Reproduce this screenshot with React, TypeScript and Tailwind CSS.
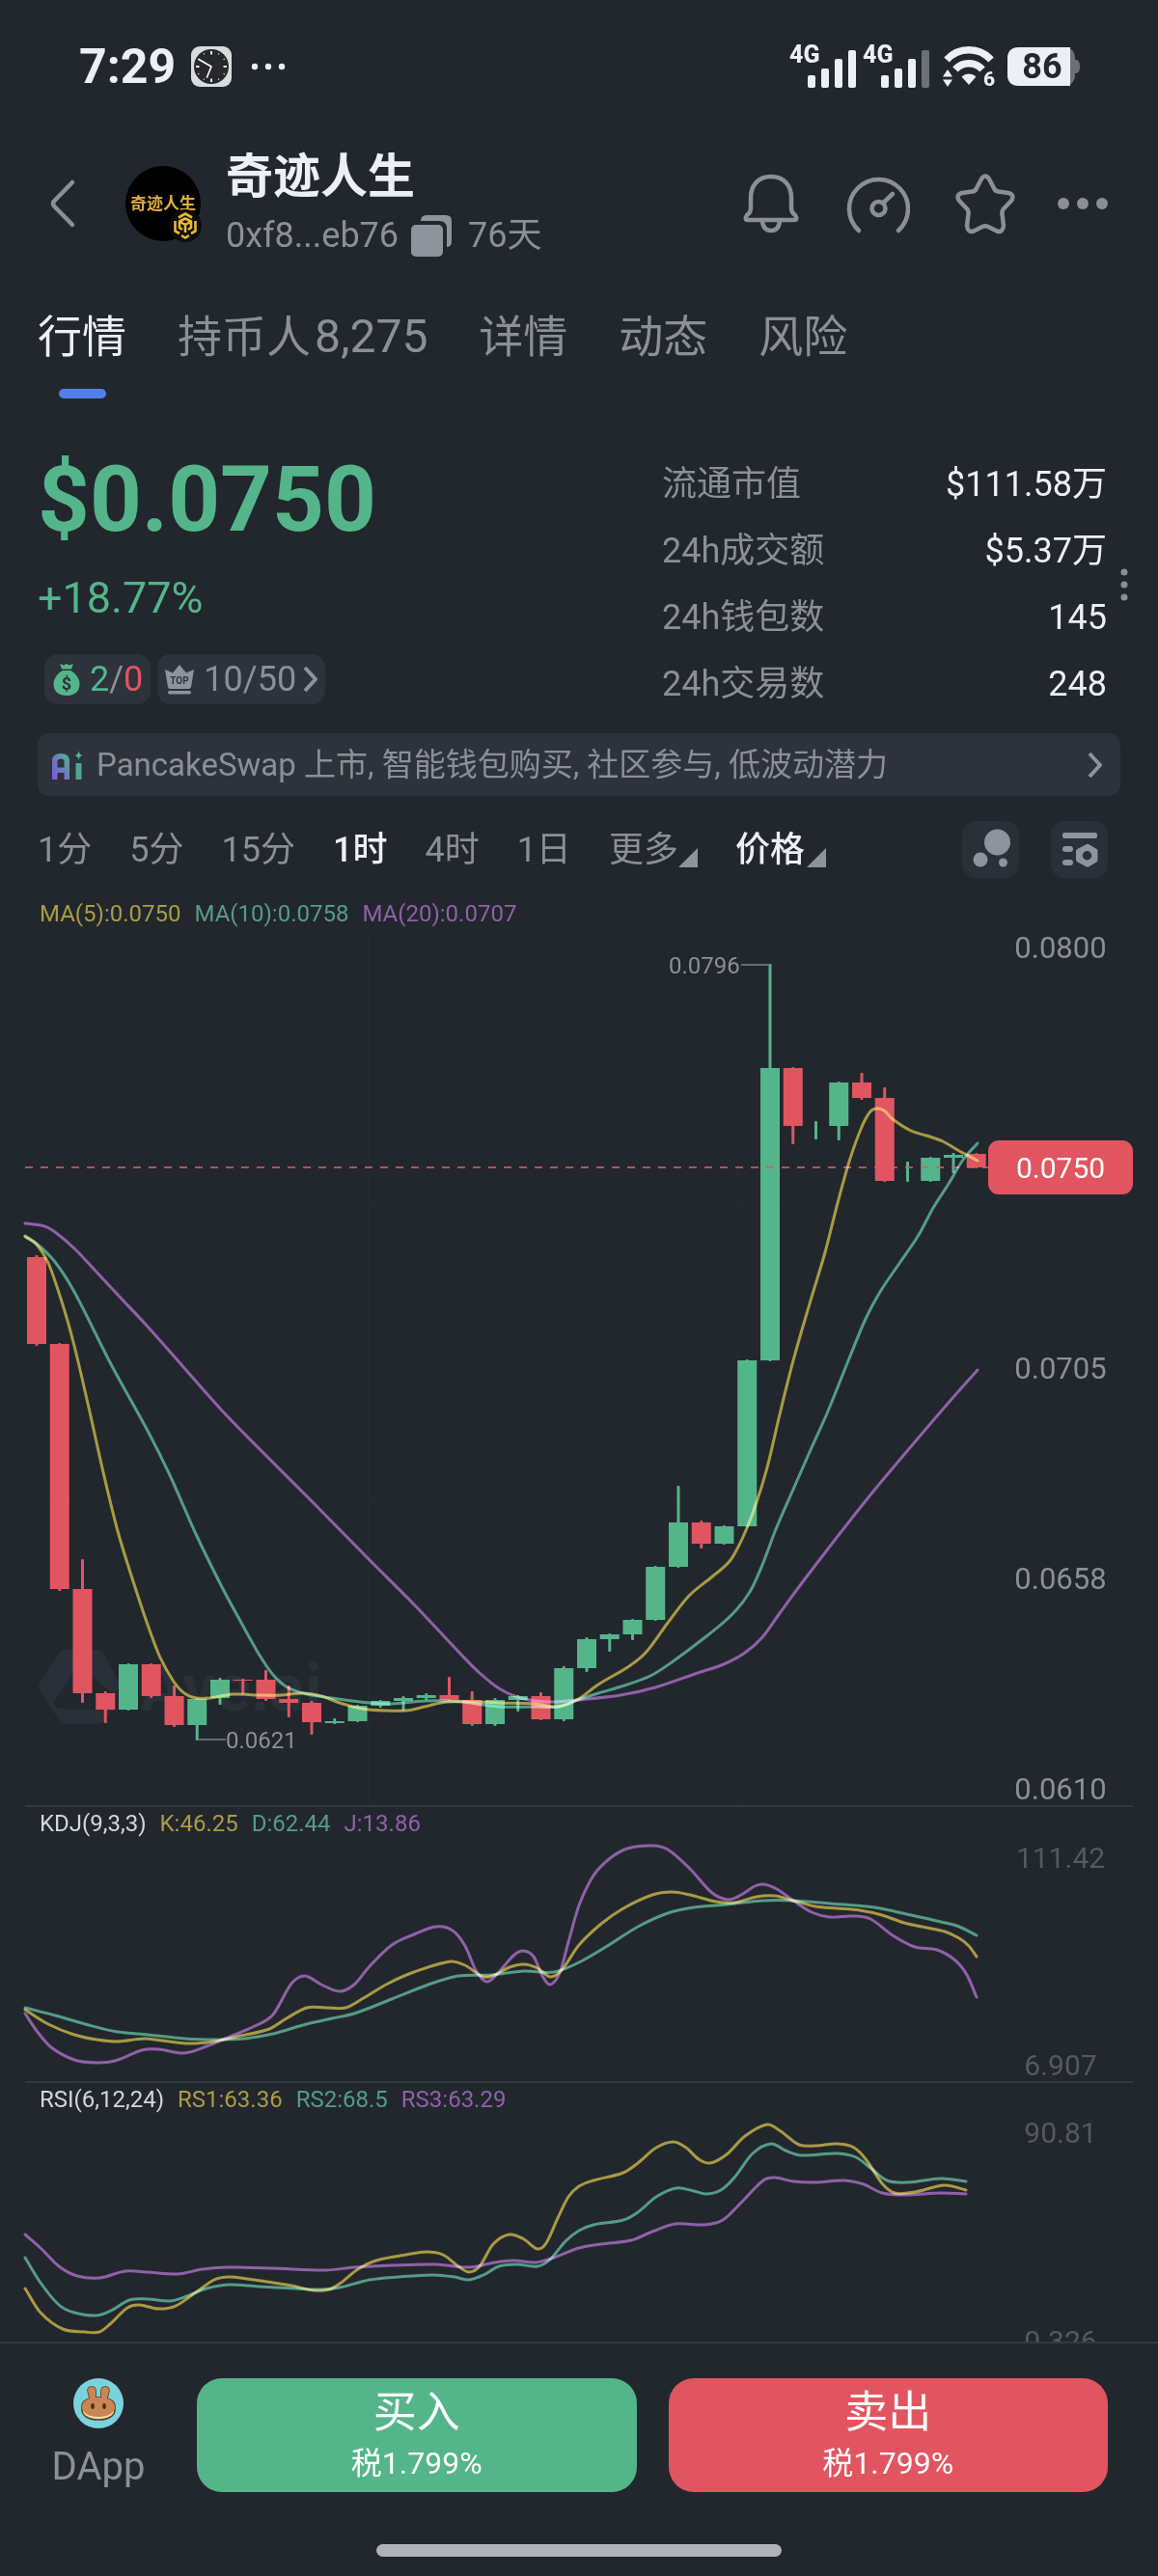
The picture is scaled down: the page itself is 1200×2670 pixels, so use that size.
import React from "react";

type Pt = [number, number];
type Candle = [top: number, bottom: number, high: number, low: number, up: 0 | 1];

const UP = "#55b58a";
const DOWN = "#e15560";
const YELLOW = "#9c881b";
const GREEN = "#3b8a6a";
const PURPLE = "#7e4494";

/** Smooth cubic path through the points. */
function smooth(p: Pt[]): string {
  let d = `M${p[0][0]} ${p[0][1]}`;
  for (let i = 0; i < p.length - 1; i++) {
    const a = p[Math.max(i - 1, 0)];
    const b = p[i];
    const c = p[i + 1];
    const e = p[Math.min(i + 2, p.length - 1)];
    const k = (c[0] - b[0]) / 3;
    const mb = (c[1] - a[1]) / (c[0] - a[0]);
    const mc = (e[1] - b[1]) / (e[0] - b[0]);
    d += `C${b[0] + k} ${b[1] + k * mb} ${c[0] - k} ${c[1] - k * mc} ${c[0]} ${c[1]}`;
  }
  return d;
}

const CANDLES: Candle[] = [
  [1303, 1393, 1301, 1395, 0], [1393, 1647, 1392, 1649, 0], [1647, 1755, 1616, 1765, 0],
  [1755, 1772, 1753, 1786, 0], [1725, 1772, 1724, 1773, 1], [1725, 1758, 1724, 1760, 0],
  [1758, 1788, 1747, 1790, 0], [1761, 1788, 1760, 1804, 1], [1741, 1760, 1739, 1767, 1],
  [1741, 1742, 1740, 1756, 0], [1741, 1761, 1731, 1763, 0], [1761, 1765, 1747, 1780, 0],
  [1765, 1785, 1763, 1798, 0], [1784, 1786, 1781, 1787, 1], [1768, 1784, 1767, 1785, 1],
  [1763, 1768, 1762, 1770, 1], [1760, 1763, 1758, 1773, 1], [1757, 1760, 1755, 1762, 1],
  [1757, 1762, 1738, 1763, 0], [1762, 1787, 1753, 1789, 0], [1762, 1787, 1760, 1789, 1],
  [1758, 1762, 1757, 1774, 1], [1758, 1782, 1754, 1783, 0], [1729, 1782, 1727, 1784, 1],
  [1699, 1729, 1697, 1733, 1], [1694, 1699, 1693, 1712, 1], [1679, 1694, 1678, 1700, 1],
  [1624, 1679, 1623, 1680, 1], [1578, 1624, 1540, 1625, 1], [1578, 1600, 1576, 1605, 0],
  [1582, 1600, 1581, 1601, 1], [1410, 1582, 1409, 1583, 1], [1107, 1410, 999, 1411, 1],
  [1107, 1167, 1106, 1186, 0], [1167, 1167, 1162, 1181, 1], [1122, 1167, 1121, 1182, 1],
  [1122, 1138, 1112, 1140, 0], [1138, 1224, 1127, 1225, 0], [1224, 1224, 1204, 1225, 1],
  [1200, 1224, 1199, 1225, 1], [1197, 1200, 1195, 1216, 1], [1196, 1210, 1195, 1211, 0],
];

const MA20: Pt[] = [[26,1268],[46,1271],[57,1277],[77,1294],[96,1314],[122,1342],[153,1375],[191,1418],[230,1462],[268,1501],[325,1558],[383,1617],[429,1663],[478,1715],[497,1734],[517,1750],[536,1759],[555,1763],[574,1764],[598,1762],[643,1757],[679,1749],[723,1734],[750,1725],[772,1713],[790,1697],[808,1672],[830,1642],[866,1595],[904,1547],[946,1497],[982,1455],[1013,1420]];
const MA10: Pt[] = [[26,1282],[38,1289],[57,1308],[77,1339],[115,1414],[153,1483],[176,1529],[203,1590],[230,1645],[249,1680],[268,1714],[283,1736],[298,1749],[318,1756],[344,1760],[383,1765],[406,1766],[440,1763],[478,1764],[517,1769],[555,1769],[578,1769],[598,1762],[620,1755],[647,1747],[674,1737],[696,1723],[732,1696],[759,1673],[777,1650],[790,1622],[804,1585],[821,1546],[839,1505],[857,1465],[880,1408],[897,1367],[912,1339],[933,1308],[952,1280],[967,1252],[983,1227],[998,1202],[1013,1185]];
const MA5: Pt[] = [[26,1281],[38,1290],[50,1309],[63,1346],[76,1391],[92,1459],[107,1526],[122,1587],[138,1639],[153,1684],[166,1718],[180,1743],[191,1755],[203,1760],[218,1760],[241,1756],[268,1757],[291,1757],[314,1755],[333,1758],[352,1765],[375,1771],[398,1773],[421,1773],[440,1769],[463,1764],[497,1764],[517,1765],[555,1766],[578,1769],[598,1762],[620,1746],[652,1727],[670,1712],[692,1682],[714,1654],[737,1635],[757,1617],[770,1593],[783,1560],[795,1521],[808,1466],[821,1414],[832,1375],[843,1338],[855,1298],[868,1247],[880,1204],[893,1168],[902,1152],[909,1149],[916,1151],[925,1160],[944,1172],[960,1177],[977,1183],[994,1193],[1013,1203]];

const K_LINE: Pt[] = [[26,2083],[50,2098],[77,2109],[100,2114],[122,2116],[149,2113],[168,2115],[195,2118],[222,2116],[245,2111],[279,2103],[297,2092],[318,2081],[337,2081],[358,2081],[375,2072],[402,2056],[429,2044],[467,2033],[482,2037],[501,2049],[513,2047],[528,2039],[543,2036],[557,2040],[570,2049],[582,2042],[600,2016],[623,1994],[646,1978],[676,1964],[696,1961],[715,1964],[742,1971],[761,1972],[784,1966],[803,1965],[822,1970],[845,1976],[868,1978],[891,1980],[914,1985],[937,1993],[960,1998],[979,2002],[994,2009],[1004,2017],[1012,2028]];
const D_LINE: Pt[] = [[26,2081],[57,2089],[92,2099],[122,2106],[153,2109],[191,2113],[222,2114],[253,2113],[283,2108],[314,2099],[344,2092],[367,2087],[406,2072],[444,2057],[475,2048],[509,2047],[543,2043],[574,2044],[600,2034],[631,2016],[661,1997],[692,1983],[719,1977],[753,1974],[791,1970],[822,1970],[860,1973],[906,1977],[944,1985],[975,1992],[994,1997],[1012,2006]];
const J_LINE: Pt[] = [[26,2087],[38,2105],[53,2122],[77,2135],[100,2138],[119,2136],[147,2125],[164,2124],[191,2128],[214,2121],[233,2113],[264,2100],[283,2088],[302,2056],[316,2048],[333,2057],[352,2064],[367,2057],[383,2038],[406,2016],[429,2005],[452,1997],[469,2001],[482,2017],[494,2044],[505,2054],[517,2044],[532,2027],[542,2022],[553,2028],[562,2048],[570,2057],[580,2045],[589,2013],[600,1975],[615,1944],[631,1927],[650,1916],[676,1913],[692,1917],[715,1937],[738,1962],[755,1969],[768,1964],[782,1955],[791,1953],[805,1958],[822,1970],[841,1982],[860,1987],[883,1986],[902,1989],[925,2006],[948,2018],[971,2021],[990,2032],[1002,2047],[1012,2070]];

const RS1: Pt[] = [[26,2372],[42,2397],[65,2414],[88,2417],[103,2417],[115,2408],[132,2392],[144,2389],[164,2393],[182,2390],[203,2376],[222,2363],[237,2360],[256,2362],[283,2366],[302,2369],[325,2374],[341,2373],[352,2367],[371,2352],[390,2343],[421,2337],[442,2334],[459,2337],[475,2349],[486,2355],[497,2349],[511,2326],[528,2316],[543,2321],[557,2331],[566,2325],[578,2299],[589,2277],[600,2266],[615,2260],[646,2252],[661,2242],[680,2226],[698,2220],[711,2226],[724,2238],[736,2242],[753,2233],[772,2214],[795,2202],[809,2209],[828,2223],[845,2224],[868,2222],[885,2226],[898,2239],[914,2263],[927,2273],[948,2272],[979,2265],[1001,2270]];
const RS2: Pt[] = [[26,2340],[42,2366],[61,2389],[77,2397],[100,2400],[115,2395],[134,2384],[153,2383],[176,2385],[191,2381],[214,2372],[237,2368],[268,2370],[306,2372],[333,2373],[352,2371],[383,2363],[413,2360],[448,2358],[471,2360],[486,2363],[501,2358],[517,2349],[536,2347],[557,2349],[570,2342],[586,2323],[600,2312],[615,2306],[646,2301],[661,2293],[680,2277],[701,2268],[719,2271],[732,2274],[747,2270],[761,2257],[780,2232],[799,2222],[814,2229],[830,2234],[868,2232],[887,2236],[902,2247],[919,2260],[941,2262],[975,2258],[1001,2261]];
const RS3: Pt[] = [[26,2316],[42,2330],[61,2349],[80,2359],[103,2361],[130,2354],[153,2355],[184,2357],[210,2352],[237,2350],[283,2351],[337,2353],[367,2350],[406,2348],[452,2347],[486,2350],[513,2345],[532,2343],[555,2345],[574,2340],[600,2330],[623,2326],[654,2322],[676,2313],[700,2305],[730,2306],[749,2301],[768,2283],[791,2260],[803,2257],[822,2261],[845,2262],[875,2260],[895,2264],[914,2273],[937,2275],[975,2273],[1001,2274]];

function Curve({ points, color }: { points: Pt[]; color: string }) {
  return <path d={smooth(points)} fill="none" stroke={color} strokeWidth="3" strokeLinecap="round" className="mix-blend-screen" />;
}

function Signal({ weak }: { weak?: boolean }) {
  return (
    <svg viewBox="0 0 70 50" className="h-[50px] w-[70px] overflow-visible" aria-hidden="true">
      <text x="0" y="21" fontSize="25" fontWeight="800" fill="#eceff4">4G</text>
      <g fill="#eceff4">
        <rect x="19" y="34" width="8" height="13" rx="2" />
        <rect x="33" y="27" width="8" height="20" rx="2" />
        <rect x="47" y="17" width="8" height="30" rx="2" />
        <rect x="61" y="8" width="8" height="39" rx="2" fill={weak ? "#6c7078" : "#eceff4"} />
      </g>
    </svg>
  );
}

function StatusBar() {
  return (
    <div className="flex h-[50px] items-center justify-between pr-20 pl-[82px]">
      <div className="flex items-center">
        <span className="text-[50px] leading-[50px] font-bold text-[#eceff4]">7:29</span>
        <svg viewBox="0 0 42 42" className="ml-4 size-[42px]" aria-hidden="true">
          <rect width="42" height="42" rx="9" fill="#d9dbdd" />
          <circle cx="21" cy="21" r="18" fill="#26282b" />
          {Array.from({ length: 12 }, (_, i) => (
            <line key={i} x1="21" y1="5" x2="21" y2={i % 3 ? 6.5 : 8.5} stroke="#e6e6e6" strokeWidth={i % 3 ? 1 : 2} transform={`rotate(${i * 30} 21 21)`} />
          ))}
          <path d="M8 13.5L21 21L16.5 32" fill="none" stroke="#fff" strokeWidth="1.6" strokeLinecap="round" strokeLinejoin="round" />
        </svg>
        <svg viewBox="0 0 36 8" className="ml-5 h-2 w-9" fill="#eceff4" aria-hidden="true">
          <circle cx="4" cy="4" r="3.2" /><circle cx="18" cy="4" r="3.2" /><circle cx="32" cy="4" r="3.2" />
        </svg>
      </div>
      <div className="flex items-center">
        <Signal />
        <span className="w-1.5" />
        <Signal weak />
        <svg viewBox="0 0 56 42" className="ml-3 h-[42px] w-14 overflow-visible" aria-hidden="true">
          <path d="M5 14A31 31 0 0 1 51 14" fill="none" stroke="#eceff4" strokeWidth="7.5" />
          <path d="M14 24A19 19 0 0 1 42 24" fill="none" stroke="#eceff4" strokeWidth="7.5" />
          <path d="M28 40L20.500 31.500A11 11 0 0 1 35.500 31.500Z" fill="#eceff4" />
          <path d="M6 24L11 31.500H1ZM6 42L1 34.500H11Z" fill="#eceff4" />
          <text x="43" y="41" fontSize="21" fontWeight="800" fill="#eceff4">6</text>
        </svg>
        <svg viewBox="0 0 76 42" className="ml-3 h-[42px] w-[76px] overflow-visible" aria-hidden="true">
          <path d="M12 1H58Q70 1 70 13V29Q70 41 58 41H12Q0 41 0 29V13Q0 1 12 1Z" fill="#6c7078" />
          <path d="M69 14h2q4 0 4 7t-4 7h-2z" fill="#6c7078" />
          <path d="M12 1H65V41H12Q0 41 0 29V13Q0 1 12 1Z" fill="#eceff4" />
          <text x="36" y="33" fontSize="36" fontWeight="700" textAnchor="middle" fill="#22272e">86</text>
        </svg>
      </div>
    </div>
  );
}

function Header() {
  return (
    <header className="mt-[60px] flex items-center pr-[51px] pl-[50px]">
      <button aria-label="返回" className="text-[#8b8f97]">
        <svg viewBox="0 0 30 52" className="h-[52px] w-[30px]" fill="none" stroke="currentColor" strokeWidth="4.500" strokeLinecap="round" strokeLinejoin="round">
          <path d="M25 4L6 23.500Q4 26 6 28.500L25 48" />
        </svg>
      </button>
      <div className="relative ml-[50px] flex size-[78px] items-center justify-center rounded-full bg-black">
        <span className="text-[17px] leading-5 font-bold whitespace-nowrap text-[#e0ad3f]">奇迹人生</span>
        <svg viewBox="0 0 34 34" className="absolute -right-px -bottom-px size-[34px]" aria-hidden="true">
          <circle cx="17" cy="17" r="17" fill="#0b0c0f" />
          <g fill="none" stroke="#ecb731" strokeWidth="2.600" strokeLinejoin="round">
            <path d="M10 8.500L17 4.500L24 8.500M6.500 12V22.500L11 25M27.500 12V22.500L23 25M13 27L17 29.500L21 27" />
            <path d="M11 12.500L17 9.500L23 12.500L17 16ZM17 16V24M11 13V19L14 21M23 13V19L20 21" />
          </g>
        </svg>
      </div>
      <div className="ml-[26px] flex-1">
        <h1 className="text-[49px] leading-[60px] font-bold text-[#eceff4]">奇迹人生</h1>
        <div className="mt-1.5 flex items-center text-[36px] leading-[48px] text-[#8b8f97]">
          <span>0xf8...eb76</span>
          <button aria-label="复制地址" className="ml-3">
            <svg viewBox="0 0 44 44" className="size-11" fill="#8f939c">
              <rect x="1" y="11" width="33" height="33" rx="5" />
              <path d="M11 7Q11 1 17 1H37Q43 1 43 7V28Q43 34 38 34V15Q38 7 30 7Z" />
            </svg>
          </button>
          <span className="ml-4">76天</span>
        </div>
      </div>
      <div className="flex items-center text-[#8b8f97]">
        <button aria-label="提醒">
          <svg viewBox="0 0 66 66" className="size-[66px]" fill="none" stroke="currentColor" strokeWidth="4.500" strokeLinecap="round" strokeLinejoin="round">
            <path d="M33 5C19 5 12 15 12 27V38Q12 42 8 45Q5 50 9 50H57Q61 50 58 45Q54 42 54 38V27C54 15 47 5 33 5Z" />
            <path d="M24 51Q25 61 33 61T42 51" />
          </svg>
        </button>
        <button aria-label="评分" className="ml-[45px]">
          <svg viewBox="0 0 66 66" className="size-[66px]" fill="none" stroke="currentColor" strokeWidth="4.500" strokeLinecap="round">
            <path d="M13 61A30.500 30.500 0 1 1 54 61" />
            <circle cx="33.500" cy="38" r="7" />
            <path d="M38.500 32L48 23" />
          </svg>
        </button>
        <button aria-label="收藏" className="ml-[45px]">
          <svg viewBox="0 0 66 66" className="size-[66px]" fill="none" stroke="currentColor" strokeWidth="4.500" strokeLinejoin="round">
            <path d="M29 7.500Q33 1.500 37 7.500L42 17Q43 20 46.500 20.500L57 22Q64 24 60 30L51.500 39Q50 41 50.500 44L52 56Q51 63.500 45 61.500L36 57Q33 55.500 30 57L21 61.500Q15 63.500 14 56L15.500 44Q16 41 14.500 39L6 30Q2 24 9 22L19.500 20.500Q23 20 24 17Z" />
          </svg>
        </button>
        <button aria-label="更多操作" className="ml-[41px]">
          <svg viewBox="0 0 54 14" className="h-3.5 w-[54px]" fill="currentColor">
            <circle cx="7" cy="7" r="6" /><circle cx="27" cy="7" r="6" /><circle cx="47" cy="7" r="6" />
          </svg>
        </button>
      </div>
    </header>
  );
}

function Tabs() {
  return (
    <nav className="mt-[53px] flex items-start gap-[53px] px-[39px] text-[46px] leading-[56px] text-[#8b8f97]">
      <button className="flex flex-col items-center text-[#eceff4]">
        行情
        <span className="mt-[26px] h-2.5 w-[49px] rounded-full bg-[#5180e9]" />
      </button>
      <button>持币人<span className="ml-1 text-[48px]">8,275</span></button>
      <button>详情</button>
      <button>动态</button>
      <button>风险</button>
    </nav>
  );
}

const STATS = [
  ["流通市值", "$111.58万"],
  ["24h成交额", "$5.37万"],
  ["24h钱包数", "145"],
  ["24h交易数", "248"],
];

function Summary() {
  return (
    <section className="mt-[55px] flex justify-between pr-[29px] pl-[39px]">
      <div>
        <div className="text-[94px] leading-[100px] font-bold text-[#55b58a]">$0.0750</div>
        <div className="mt-6 text-[45px] leading-[56px] text-[#55b58a]">+18.77%</div>
        <div className="mt-[30px] flex gap-[7px] pl-[7px] text-[36px] leading-[52px] text-[#8b8f97]">
          <div className="flex items-center rounded-[14px] bg-[#2d323b] pr-2 pl-[9px]">
            <svg viewBox="0 0 28 34" className="h-[34px] w-7 overflow-visible" fill="#55b58a" aria-hidden="true">
              <path d="M7 1L11 2.500L14 1L17 2.500L21 1L19 6.500H9Z" />
              <path d="M10 8H18C24 11 27.500 17 27.500 22C27.500 30 22 34 14 34S0.500 30 0.500 22C0.500 17 4 11 10 8Z" />
              <text x="14" y="28" fontSize="18" fontWeight="700" textAnchor="middle" fill="#2d323b">$</text>
            </svg>
            <span className="ml-2.5"><span className="text-[#55b58a]">2</span>/<span className="text-[#e15560]">0</span></span>
          </div>
          <button className="flex items-center rounded-[14px] bg-[#2d323b] pr-1.5 pl-2">
            <svg viewBox="0 0 30 32" className="h-8 w-[30px] overflow-visible" fill="#8f939c" aria-hidden="true">
              <path d="M0 6L8 9.500L15 1L22 9.500L30 6L27 24Q26.500 26 24.500 26H5.500Q3.500 26 3 24Z" />
              <rect x="3" y="28" width="24" height="3.500" rx="1.700" />
              <text x="15" y="21" fontSize="10" fontWeight="700" textAnchor="middle" fill="#2d323b">TOP</text>
            </svg>
            <span className="ml-2.5">10/50</span>
            <svg viewBox="0 0 18 30" className="ml-1.5 h-[30px] w-[18px]" fill="none" stroke="#8f939c" strokeWidth="4" strokeLinejoin="round" aria-hidden="true">
              <path d="M3 3L14 15L3 27" />
            </svg>
          </button>
        </div>
      </div>
      <div className="flex items-center">
        <dl className="w-[461px] text-[36px] leading-[69px]">
          {STATS.map(([label, value]) => (
            <div key={label} className="flex justify-between">
              <dt className="text-[#8b8f97]">{label}</dt>
              <dd className="text-[#eceff4]">{value}</dd>
            </div>
          ))}
        </dl>
        <svg viewBox="0 0 12 36" className="ml-3 h-9 w-3" fill="#8b8f97" aria-hidden="true">
          <circle cx="6" cy="5" r="3.500" /><circle cx="6" cy="18" r="3.500" /><circle cx="6" cy="31" r="3.500" />
        </svg>
      </div>
    </section>
  );
}

function AiBanner() {
  return (
    <button className="mx-[39px] mt-4 flex h-[65px] items-center rounded-xl bg-[#2d323b] pr-[17px] pl-[15px] text-left text-[33px] leading-[48px] text-[#8b8f97]">
      <svg viewBox="0 0 32 32" className="size-8" aria-hidden="true">
        <defs>
          <linearGradient id="ai" x1="0" y1="1" x2="1" y2="0">
            <stop offset="0" stopColor="#7f55dc" /><stop offset="0.450" stopColor="#6d78c4" /><stop offset="1" stopColor="#55b58a" />
          </linearGradient>
        </defs>
        <path d="M0 31V12Q0 4 9 4T18 12V31H12.500V24H5.500V31ZM5.500 18.500H12.500V12Q12.500 9.500 9 9.500T5.500 12Z" fill="url(#ai)" fillRule="evenodd" />
        <path d="M27.500 1Q28 5.500 32 6Q28 6.500 27.500 11Q27 6.500 23 6Q27 5.500 27.500 1Z" fill="#57b09b" />
        <rect x="24.500" y="14" width="6" height="17" fill="#4ea596" />
      </svg>
      <span className="ml-3.5 flex-1">PancakeSwap 上市, 智能钱包购买, 社区参与, 低波动潜力</span>
      <svg viewBox="0 0 18 30" className="h-[30px] w-[18px]" fill="none" stroke="#8f939c" strokeWidth="4" strokeLinejoin="round" aria-hidden="true">
        <path d="M3 3L14 15L3 27" />
      </svg>
    </button>
  );
}

function Corner() {
  return (
    <svg viewBox="0 0 20 20" className="mt-4 size-5" fill="#8f939c" aria-hidden="true">
      <path d="M20 0V20H0Z" />
    </svg>
  );
}

function Toolbar() {
  return (
    <div className="mt-[26px] flex h-[59px] items-center justify-between pr-[52px] pl-[39px]">
      <div className="flex items-center gap-[39px] text-[36px] leading-[56px] text-[#8b8f97]">
        <button>1分</button>
        <button>5分</button>
        <button>15分</button>
        <button className="font-medium text-[#eceff4]">1时</button>
        <button>4时</button>
        <button>1日</button>
        <button className="flex items-center">更多<Corner /></button>
        <button className="flex items-center gap-0.5 font-medium text-[#eceff4]">价格<Corner /></button>
      </div>
      <div className="flex gap-[33px]">
        <button aria-label="气泡图" className="rounded-[14px] bg-[#2a2f38]">
          <svg viewBox="0 0 59 59" className="size-[59px]" fill="#8f939c">
            <circle cx="36.500" cy="22" r="13.500" /><circle cx="19" cy="40" r="7.500" /><circle cx="42.500" cy="43" r="4.500" />
          </svg>
        </button>
        <button aria-label="图表设置" className="rounded-[14px] bg-[#2a2f38]">
          <svg viewBox="0 0 59 59" className="size-[59px]" fill="#8f939c">
            <rect x="12" y="12" width="36" height="6" rx="2" />
            <rect x="12" y="26" width="11" height="6" rx="3" />
            <rect x="12" y="40" width="11" height="6" rx="3" />
            <path fillRule="evenodd" d="M37 24Q38 23.500 39 24L47.500 29Q48.500 30 48.500 31V40Q48.500 41.500 47.500 42.500L39 47.500Q38 48 37 47.500L27.500 42.500Q26 41.500 26 40V31Q26 30 27.500 29ZM37.500 31A4.700 4.700 0 1 0 37.500 40.400A4.700 4.700 0 1 0 37.500 31Z" />
          </svg>
        </button>
      </div>
    </div>
  );
}

function Legend({ title, items }: { title?: string; items: [string, string, string] }) {
  return (
    <div className="flex gap-3.5 px-[41px] text-[24px] leading-[34px]">
      {title && <span className="text-[#d3d6db]">{title}</span>}
      <span className="text-[#ab9c44]">{items[0]}</span>
      <span className="text-[#559c85]">{items[1]}</span>
      <span className="text-[#8f61a7]">{items[2]}</span>
    </div>
  );
}

function PriceChart() {
  return (
    <svg viewBox="0 964 1200 907" className="block w-full" role="img" aria-label="K线图">
      <g stroke="#ffffff" strokeOpacity="0.015" strokeWidth="2">
        <path d="M382 964V1871M765 964V1871M0 1246H1200M0 1557H1200" />
      </g>
      <g fill="#2a3038">
        <path d="M62 1713Q64 1710 68 1710H101Q105 1710 107 1713L122 1742Q124 1746 122 1750L119 1757L85 1729Q80 1727 76 1732L57 1763Q54 1770 62 1771L116 1772L108 1784Q106 1787 101 1787H68Q64 1787 62 1784L41 1752Q39 1748 41 1744Z" />
        <text x="145" y="1773" fontSize="68" fontWeight="700">Ave.ai</text>
      </g>
      {CANDLES.map(([top, bottom, high, low, up], i) => {
        const x = 38 + i * 23.75;
        return (
          <g key={i} fill={up ? UP : DOWN}>
            <rect x={x - 10} y={top} width="20" height={bottom - top} />
            <rect x={x - 1.5} y={high} width="3" height={low - high} rx="1" />
          </g>
        );
      })}
      <path d="M26 1210H1024" stroke="#d95a70" strokeOpacity="0.8" strokeWidth="2" strokeDasharray="8 8" />
      <Curve points={MA20} color={PURPLE} />
      <Curve points={MA10} color={GREEN} />
      <Curve points={MA5} color={YELLOW} />
      <path d="M768 1000H797M206 1803H234" stroke="#656a72" strokeWidth="2" />
      <g fontSize="24" fill="#8b8f97">
        <text x="693" y="1009">0.0796</text>
        <text x="234" y="1812">0.0621</text>
      </g>
      <g fontSize="31" fill="#8b8f97" textAnchor="middle">
        <text x="1099" y="993">0.0800</text>
        <text x="1099" y="1429">0.0705</text>
        <text x="1099" y="1647">0.0658</text>
        <text x="1099" y="1865">0.0610</text>
      </g>
      <rect x="1024" y="1182" width="150" height="56" rx="11" fill={DOWN} />
      <text x="1099" y="1221" fontSize="30" textAnchor="middle" fill="#ffffff">0.0750</text>
    </svg>
  );
}

function Divider() {
  return <div className="mx-[26px] h-0.5 bg-[#343942]" />;
}

function Indicators() {
  return (
    <>
      <Divider />
      <Legend title="KDJ(9,3,3)" items={["K:46.25", "D:62.44", "J:13.86"]} />
      <svg viewBox="0 1907 1200 250" className="block w-full" role="img" aria-label="KDJ">
        <Curve points={D_LINE} color={GREEN} />
        <Curve points={K_LINE} color={YELLOW} />
        <Curve points={J_LINE} color={PURPLE} />
        <g fontSize="30" fill="#555962" textAnchor="middle">
          <text x="1099" y="1936">111.42</text>
          <text x="1099" y="2151">6.907</text>
        </g>
      </svg>
      <Divider />
      <Legend title="RSI(6,12,24)" items={["RS1:63.36", "RS2:68.5", "RS3:63.29"]} />
      <svg viewBox="0 2193 1200 234" className="block w-full" role="img" aria-label="RSI">
        <Curve points={RS3} color={PURPLE} />
        <Curve points={RS2} color={GREEN} />
        <Curve points={RS1} color={YELLOW} />
        <g fontSize="30" fill="#555962" textAnchor="middle">
          <text x="1099" y="2221">90.81</text>
          <text x="1099" y="2437">0.326</text>
        </g>
      </svg>
    </>
  );
}

function TradeButton({ label, className }: { label: string; className: string }) {
  return (
    <button className={`flex flex-1 flex-col items-center rounded-[26px] pt-2 pb-[5px] text-white ${className}`}>
      <span className="text-[45px] leading-[56px]">{label}</span>
      <span className="text-[32px] leading-[48px]">税1.799%</span>
    </button>
  );
}

function BottomBar() {
  return (
    <footer className="border-t-2 border-[#343942] pt-9">
      <div className="flex pr-[52px]">
        <a href="#dapp" className="flex w-[204px] flex-col items-center text-[40px] leading-[52px] text-[#8b8f97]">
          <svg viewBox="0 0 52 52" className="size-[52px]" aria-hidden="true">
            <circle cx="26" cy="26" r="26" fill="#79d3dc" />
            <g stroke="#5d3a24" strokeWidth="1.600">
              <path d="M9 30C9 25 13 22 17 21L15 13Q15 9 19 9T23 13V20H29V13Q29 9 33 9T37 13L35 21C39 22 43 25 43 30V33C43 39 36 43 26 43S9 39 9 33Z" fill="#f3dfae" />
              <path d="M9 30C9 25 13 22 17 21L15 13Q15 9 19 9T23 13V20H29V13Q29 9 33 9T37 13L35 21C39 22 43 25 43 30C43 36 36 40 26 40S9 36 9 30Z" fill="#c98552" stroke="none" />
            </g>
            <ellipse cx="20" cy="29" rx="1.800" ry="3" fill="#4b2c19" />
            <ellipse cx="32" cy="29" rx="1.800" ry="3" fill="#4b2c19" />
          </svg>
          <span className="mt-3.5">DApp</span>
        </a>
        <div className="flex flex-1 gap-[33px]">
          <TradeButton label="买入" className="bg-[#55b58a]" />
          <TradeButton label="卖出" className="bg-[#e15560]" />
        </div>
      </div>
      <div className="mx-auto mt-[54px] mb-5 h-[13px] w-[35%] rounded-full bg-[#b0b2b8]" />
    </footer>
  );
}

export default function App() {
  return (
    <div className="flex min-h-screen flex-col bg-[#22272e] pt-11 font-['Roboto','Noto_Sans_CJK_SC',sans-serif]">
      <StatusBar />
      <Header />
      <Tabs />
      <Summary />
      <AiBanner />
      <Toolbar />
      <div className="mt-5">
        <Legend items={["MA(5):0.0750", "MA(10):0.0758", "MA(20):0.0707"]} />
        <PriceChart />
        <Indicators />
      </div>
      <BottomBar />
    </div>
  );
}
